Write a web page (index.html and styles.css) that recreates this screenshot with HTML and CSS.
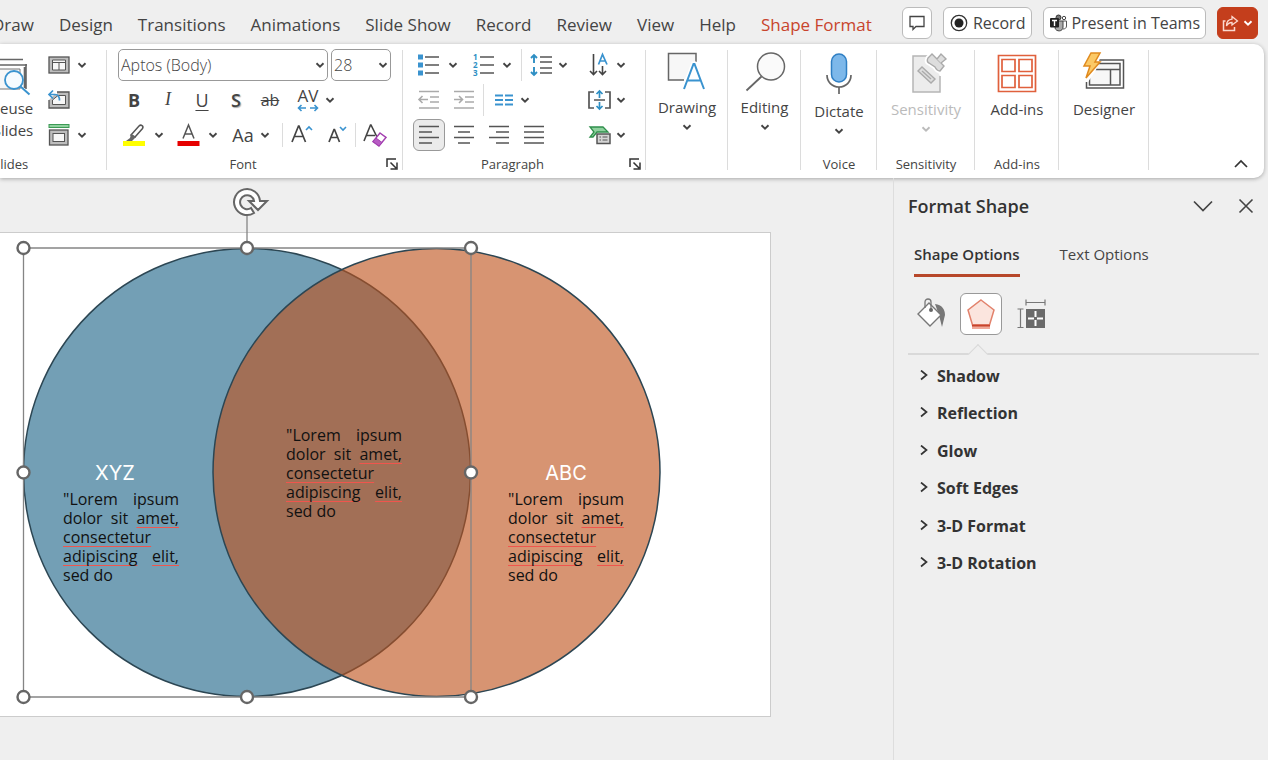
FILE: index.html
```html
<!DOCTYPE html>
<html lang="en">
<head>
    <meta charset="UTF-8">
    <meta name="viewport" content="width=device-width, initial-scale=1.0">
    <title>Presentation - Format Shape</title>
    <link rel="stylesheet" href="styles.css">
</head>
<body>

    <!-- shared symbols -->
    <svg class="defs" aria-hidden="true">
        <symbol id="chev" viewBox="0 0 10 10"><path d="M1.5 3.2 5 6.6 8.5 3.2" fill="none" stroke="currentColor" stroke-width="1.9"/></symbol>
        <symbol id="launch" viewBox="0 0 12 12"><path d="M1 9V1h9M4.500 4.500 10 10M11 4.500V11H4.500" fill="none" stroke="#333" stroke-width="1.500"/></symbol>
        <symbol id="right" viewBox="0 0 10 12"><path d="M2 .5 7.500 5 2 9.500" fill="none" stroke="#333" stroke-width="1.700"/></symbol>
    </svg>

    <header class="topbar">
        <nav class="tabs">
            <a href="#">Draw</a>
            <a href="#">Design</a>
            <a href="#">Transitions</a>
            <a href="#">Animations</a>
            <a href="#">Slide Show</a>
            <a href="#">Record</a>
            <a href="#">Review</a>
            <a href="#">View</a>
            <a href="#">Help</a>
            <a href="#" class="active">Shape Format</a>
        </nav>
        <div class="actions">
            <button class="pill" aria-label="Comments">
                <svg width="16" height="16" viewBox="0 0 16 16"><path d="M1 1.500h14v10H7L4 14.500v-3H1z" fill="none" stroke="#444" stroke-width="1.300"/></svg>
            </button>
            <button class="pill">
                <svg width="18" height="18" viewBox="0 0 18 18"><circle cx="9" cy="9" r="7.700" fill="none" stroke="#333" stroke-width="1.300"/><circle cx="9" cy="9" r="4.500" fill="#222"/></svg>
                Record
            </button>
            <button class="pill teams">
                <svg width="18" height="18" viewBox="0 0 18 18"><circle cx="9.500" cy="3.500" r="2.500" fill="#777" stroke="#333"/><circle cx="15" cy="4" r="1.700" fill="none" stroke="#444"/><path d="M8 7h6v6c0 5-7 5-8 1z" fill="#aaa" stroke="#444"/><path d="M14 7h3.500v5c0 2-1.500 3-3.500 3" fill="none" stroke="#555"/><rect x="1" y="4" width="9" height="9.500" rx="1" fill="#222"/><path d="M3 6.500h5M5.500 6.500V12" stroke="#fff" stroke-width="1.400"/></svg>
                Present in Teams
            </button>
            <button class="pill share" aria-label="Share">
                <svg width="17" height="17" viewBox="0 0 17 17"><path d="M3.500 6H1.500v9.500h11V12" fill="none" stroke="#fbd9cf" stroke-width="1.500"/><path d="M10 1.500 15.500 6 10 10V7.500C7 7.500 5.500 9 4.500 11 4.500 7 6.500 4.500 10 4.200z" fill="none" stroke="#fbd9cf" stroke-width="1.300"/></svg>
                <svg class="chev"><use href="#chev"/></svg>
            </button>
        </div>
    </header>

    <div class="ribbon">
        <section class="group slides">
            <div class="reuse-col">
                <button class="big">
                    <svg width="44" height="40" viewBox="0 0 44 40"><path d="M2 7.500h31M0 13h37M36 12v25M34.500 15v21" fill="none" stroke="#666" stroke-width="1.600"/><path d="M2 17h28v20H2" fill="#f7f7f7" stroke="#777"/><circle cx="24" cy="28" r="9" fill="#f5fbff" stroke="#3a93cf" stroke-width="1.800"/><path d="m30.500 34.500 9 8" stroke="#3a93cf" stroke-width="2"/></svg>
                    <span>Reuse<br>Slides</span>
                </button>
            </div>
            <div class="slide-tools">
                <button class="drop wide" aria-label="Layout">
                    <svg class="icon" viewBox="0 0 24 24"><rect x="2" y="4" width="20" height="16" fill="#bdbdbd" stroke="#555" stroke-width="1.300"/><path d="M5.500 7h13v10h-13z" fill="#f7f7f7" stroke="#555"/><path d="M5.500 9.500h13M12 9.500V17" stroke="#555" fill="none"/></svg>
                    <svg class="chev"><use href="#chev"/></svg>
                </button>
                <button class="drop" aria-label="Reset">
                    <svg class="icon" viewBox="0 0 24 24"><path d="M10 4h12v16H2v-8" fill="#bdbdbd" stroke="#555" stroke-width="1.300"/><path d="M11 7.500h7.500v9h-13V12z" fill="#f7f7f7" stroke="#555"/><path d="M0 1h10v5H0z" fill="#fff"/><path d="M2 6.500h6c3.500 0 4.500 2 4.500 6M6 2.500l-4 4 4 4" fill="none" stroke="#3a93cf" stroke-width="1.700"/></svg>
                </button>
                <button class="drop wide" aria-label="Section">
                    <svg class="icon" viewBox="0 0 24 24"><rect x="2" y="1.500" width="20" height="3" fill="#8fd19e" stroke="#3c9a55"/><rect x="2.500" y="7" width="18.500" height="15" fill="#bdbdbd" stroke="#555" stroke-width="1.300"/><rect x="6" y="10.500" width="11.500" height="8" fill="#f7f7f7" stroke="#555"/></svg>
                    <svg class="chev"><use href="#chev"/></svg>
                </button>
            </div>
            <h2>Slides</h2>
        </section>

        <section class="group font">
            <div class="row fields">
                <label class="field name">
                    <select aria-label="Font"><option>Aptos (Body)</option></select>
                    <svg class="chev"><use href="#chev"/></svg>
                </label>
                <label class="field size">
                    <select aria-label="Font size"><option>28</option></select>
                    <svg class="chev"><use href="#chev"/></svg>
                </label>
            </div>
            <div class="row styles">
                <button class="tool bold">B</button>
                <button class="tool italic">I</button>
                <button class="tool underline">U</button>
                <button class="tool shadow">S</button>
                <button class="tool strike">ab</button>
                <button class="drop spacing" aria-label="Character spacing">
                    <span class="av">AV
                        <svg width="22" height="8" viewBox="0 0 22 8"><path d="M1 4h8M4.500 1l-3 3 3 3M13 4h8M17.500 1l3 3-3 3" fill="none" stroke="#3a93cf" stroke-width="1.600"/></svg>
                    </span>
                    <svg class="chev"><use href="#chev"/></svg>
                </button>
            </div>
            <div class="row colors">
                <button class="drop wide" aria-label="Text highlight color">
                    <svg class="icon" viewBox="0 0 24 24"><path d="m9 12 8-9c2-2 5 0 3.500 2.500L13 14z" fill="#fff" stroke="#555" stroke-width="1.500"/><path d="m9 11-1 4-4 3h6l4-4z" fill="#666"/><path d="M1 18h22v5H1z" fill="#ff0"/></svg>
                    <svg class="chev"><use href="#chev"/></svg>
                </button>
                <button class="drop wide" aria-label="Font color">
                    <svg class="icon" viewBox="0 0 24 24"><path d="M7 15.500 12.500 2 18 15.500M9 11h7" fill="none" stroke="#555" stroke-width="1.500"/><path d="M1.500 18h22v5h-22z" fill="#e60000"/></svg>
                    <svg class="chev"><use href="#chev"/></svg>
                </button>
                <button class="drop"><span class="case">Aa</span> <svg class="chev"><use href="#chev"/></svg></button>
                <div class="grow-tools">
                    <button class="resize" aria-label="Increase font size">
                        <svg class="icon" viewBox="0 0 24 24"><path d="M1 19 7.500 3h.5l6.500 16M3.500 13.500H12" fill="none" stroke="#444" stroke-width="1.700"/><path d="m15 7 3-3 3 3" fill="none" stroke="#3a93cf" stroke-width="1.600"/></svg>
                    </button>
                    <button class="resize" aria-label="Decrease font size">
                        <svg class="icon" viewBox="0 0 24 24"><path d="M6 19 11 6.500h.5L16.500 19M8 14.500h7" fill="none" stroke="#444" stroke-width="1.700"/><path d="m17 4 3 3 3-3" fill="none" stroke="#3a93cf" stroke-width="1.600"/></svg>
                    </button>
                    <button class="resize clear" aria-label="Clear formatting">
                        <svg class="icon" viewBox="0 0 24 24"><path d="M0 18 6.500 2h.5l6 12M2.500 12.500H11" fill="none" stroke="#444" stroke-width="1.600"/><path d="m16 10 6 4.500-7 8.500-6-4.500z" fill="#fff" stroke="#a33fb0" stroke-width="1.500"/><path d="m12 15 6 4.500-3 3.500-6-4.500z" fill="#b85cc4" stroke="#a33fb0"/></svg>
                    </button>
                </div>
            </div>
            <h2>Font</h2>
            <button class="launcher" aria-label="Font settings"><svg width="12" height="12"><use href="#launch"/></svg></button>
        </section>

        <section class="group paragraph">
            <div class="row">
                <button class="drop wide" aria-label="Bullets">
                    <svg class="icon" viewBox="0 0 24 24"><path d="M2 1.500h5v5H2zM2 9.500h5v5H2zM2 17.500h5v5H2z" fill="#3a93cf"/><path d="M9 4h14M9 12h14M9 20h14" stroke="#555" stroke-width="1.700"/></svg>
                    <svg class="chev"><use href="#chev"/></svg>
                </button>
                <button class="drop wide" aria-label="Numbering">
                    <svg class="icon" viewBox="0 0 24 24"><g class="digits"><text x="3" y="7">1</text><text x="3" y="15">2</text><text x="3" y="23">3</text></g><path d="M10 4h14M10 12h14M10 20h14" stroke="#555" stroke-width="1.700"/></svg>
                    <svg class="chev"><use href="#chev"/></svg>
                </button>
                <button class="drop ruled" aria-label="Line spacing">
                    <svg class="icon" viewBox="0 0 24 24"><path d="M4 2v8M4 14v8M1 5l3-3 3 3M1 19l3 3 3-3" fill="none" stroke="#2e8fc4" stroke-width="1.900"/><path d="M10 4h12M10 9h12M10 15h12M10 20h12" stroke="#555" stroke-width="1.700"/></svg>
                    <svg class="chev"><use href="#chev"/></svg>
                </button>
                <button class="drop last" aria-label="Text direction">
                    <svg class="icon" viewBox="0 0 24 24"><path d="M5.500 1v20M2 18l3.500 3.500L9 18M14.500 13v8M11 18l3.500 3.500L18 18" fill="none" stroke="#444" stroke-width="1.600"/><path d="m10.500 11.500 4-10 4.500 10M12 8h5.500" fill="none" stroke="#3a93cf" stroke-width="1.700"/></svg>
                    <svg class="chev"><use href="#chev"/></svg>
                </button>
            </div>
            <div class="row">
                <button class="tool" aria-label="Decrease indent">
                    <svg class="icon" viewBox="0 0 24 24"><path d="M2 3.500h20M13 9h9M13 14h9M2 20h20M2 11.500h9M5.500 8 2 11.500 5.500 15" fill="none" stroke="#aaa" stroke-width="1.600"/></svg>
                </button>
                <button class="tool" aria-label="Increase indent">
                    <svg class="icon" viewBox="0 0 24 24"><path d="M2 3.500h20M13 9h9M13 14h9M2 20h20M2 11.500h8M7 8l3.500 3.500L7 15" fill="none" stroke="#aaa" stroke-width="1.600"/></svg>
                </button>
                <button class="drop ruled columns" aria-label="Columns">
                    <svg class="icon" viewBox="0 0 24 24"><path d="M3 7.500h8M3 12h8M3 16.500h8M13 7.500h8M13 12h8M13 16.500h8" stroke="#3a93cf" stroke-width="2"/></svg>
                    <svg class="chev"><use href="#chev"/></svg>
                </button>
                <button class="drop last" aria-label="Align text">
                    <svg class="icon" viewBox="0 0 24 24"><path d="M6 4H1v16h5M17 4h5v16h-5M6 12h11" fill="none" stroke="#555" stroke-width="1.700"/><path d="M11.500 10V3M8.500 6l3-3 3 3M11.500 14v7M8.500 18l3 3 3-3" fill="none" stroke="#2e8fc4" stroke-width="1.700"/></svg>
                    <svg class="chev"><use href="#chev"/></svg>
                </button>
            </div>
            <div class="row">
                <button class="tool on" aria-label="Align left">
                    <svg class="icon" viewBox="0 0 24 24"><path d="M2 3.500h20M2 9h13M2 14.500h20M2 20h13" stroke="#555" stroke-width="1.700"/></svg>
                </button>
                <button class="tool" aria-label="Center">
                    <svg class="icon" viewBox="0 0 24 24"><path d="M2 3.500h20M6 9h12M2 14.500h20M6 20h12" stroke="#555" stroke-width="1.700"/></svg>
                </button>
                <button class="tool" aria-label="Align right">
                    <svg class="icon" viewBox="0 0 24 24"><path d="M2 3.500h20M9 9h13M2 14.500h20M9 20h13" stroke="#555" stroke-width="1.700"/></svg>
                </button>
                <button class="tool" aria-label="Justify">
                    <svg class="icon" viewBox="0 0 24 24"><path d="M2 3.500h20M2 9h20M2 14.500h20M2 20h20" stroke="#555" stroke-width="1.700"/></svg>
                </button>
                <button class="drop last" aria-label="Convert to SmartArt">
                    <svg class="icon" viewBox="0 0 24 24"><path d="M2 4h13l5 5H9l-4 5H2l4-5z" fill="#8fd19e" stroke="#2f8f4c" stroke-width="1.300"/><rect x="9" y="11" width="13" height="9.500" fill="#d5d5d5" stroke="#555" stroke-width="1.500"/><path d="M11.500 14h1.500M14.500 14h5M11.500 17h1.500M14.500 17h5" stroke="#555"/></svg>
                    <svg class="chev"><use href="#chev"/></svg>
                </button>
            </div>
            <h2>Paragraph</h2>
            <button class="launcher" aria-label="Paragraph settings"><svg width="12" height="12"><use href="#launch"/></svg></button>
        </section>

        <section class="group drawing">
            <button class="big">
                <svg width="40" height="40" viewBox="0 0 40 40"><path d="M29 10V1.500H1.500V28H17" fill="#f7f7f7" stroke="#666" stroke-width="1.500"/><path d="m17 37 9.500-25h1L37 37M20.500 28.500h13" fill="none" stroke="#fff" stroke-width="5"/><path d="m17 37 9.500-25h1L37 37M20.500 28.500h13" fill="none" stroke="#3a93cf" stroke-width="2"/></svg>
                <span>Drawing</span>
                <svg class="chev"><use href="#chev"/></svg>
            </button>
        </section>
        <section class="group editing">
            <button class="big">
                <svg width="40" height="40" viewBox="0 0 40 40"><circle cx="26" cy="14.500" r="13.500" fill="#fafafa" stroke="#666" stroke-width="1.500"/><path d="M16.500 24.500 1.500 38.500" stroke="#666" stroke-width="1.800"/></svg>
                <span>Editing</span>
                <svg class="chev"><use href="#chev"/></svg>
            </button>
        </section>
        <section class="group voice">
            <button class="big">
                <svg width="40" height="44" viewBox="0 0 40 44"><rect x="12.500" y="2" width="15" height="28" rx="7.500" fill="#7db8ea" stroke="#2f7fc4" stroke-width="1.500"/><path d="M8 23c0 7 5 12 12 12s12-5 12-12M20 35v7" fill="none" stroke="#666" stroke-width="1.700"/></svg>
                <span>Dictate</span>
                <svg class="chev"><use href="#chev"/></svg>
            </button>
            <h2>Voice</h2>
        </section>
        <section class="group sensitivity">
            <button class="big" disabled>
                <svg width="40" height="42" viewBox="0 0 40 42"><path d="M23 4H7v36h27V24" fill="#ececec" stroke="#b5b5b5" stroke-width="1.500"/><g stroke-width="1.400"><path d="m12 19 4-4 13 12-4 4z" fill="#ddd" stroke="#aaa"/><path d="m16 19 9 8" stroke="#aaa"/><path d="m22 6 4-4 12 12-4 5c-2 0-4-2-5-4l-6-4c-2-1-2-3-1-5z" fill="#ddd" stroke="#fff" stroke-width="5"/><path d="m22 6 4-4 12 12-4 5c-2 0-4-2-5-4l-6-4c-2-1-2-3-1-5z" fill="#ddd" stroke="#aaa"/><path d="m31 7 4-5 5 5-5 4" fill="#ddd" stroke="#aaa"/></g></svg>
                <span>Sensitivity</span>
                <svg class="chev"><use href="#chev"/></svg>
            </button>
            <h2>Sensitivity</h2>
        </section>
        <section class="group addins">
            <button class="big">
                <svg width="40" height="42" viewBox="0 0 40 42"><path d="M1.500 3.500h37v36h-37zM5 7.500h13v12H5zM22 7.500h13v12H22zM5 23.500h13v12H5zM22 23.500h13v12H22z" fill="none" stroke="#e0603c" stroke-width="1.700"/></svg>
                <span>Add-ins</span>
            </button>
            <h2>Add-ins</h2>
        </section>
        <section class="group designer">
            <button class="big">
                <svg width="42" height="42" viewBox="0 0 42 42"><path d="M3.500 8h37v28h-37z" fill="#fff" stroke="#555" stroke-width="1.500"/><path d="M6.500 11.500H37V33H6.500zM10 17.500h27M27.500 17.500V33" fill="#f7f7f7" stroke="#555" stroke-width="1.500"/><path d="M0 0h19L13 18 5 30H0z" fill="#fff"/><path d="M8 1h9l-5 9h5L3 26l4-12H1z" fill="#fbc966" stroke="#e08a1e" stroke-width="1.500"/></svg>
                <span>Designer</span>
            </button>
        </section>
        <button class="collapse" aria-label="Collapse ribbon">
            <svg width="14" height="10" viewBox="0 0 14 10"><path d="m1 8 6-6 6 6" fill="none" stroke="#333" stroke-width="1.700"/></svg>
        </button>
    </div>

    <div class="workspace">
        <main class="canvas">
            <div class="slide">
                <svg class="venn" width="700" height="530" viewBox="0 -40 700 530">
                    <ellipse cx="247" cy="239.500" rx="223.500" ry="224" fill="#739fb5" stroke="#2c4653" stroke-width="1.500"/>
                    <ellipse cx="436.500" cy="239.500" rx="223.500" ry="224" fill="#be521b" fill-opacity=".62" stroke="#2c4653" stroke-width="1.500"/>
                    <g fill="none" stroke="#858585" stroke-width="1.300">
                        <path d="M23.500 15H471V464H23.500zM247 15V-22"/>
                    </g>
                    <g fill="#fff" stroke="#666" stroke-width="2.400">
                        <circle cx="23.500" cy="15" r="6"/><circle cx="247" cy="15" r="6"/><circle cx="471" cy="15" r="6"/>
                        <circle cx="23.500" cy="239.500" r="6"/><circle cx="471" cy="239.500" r="6"/>
                        <circle cx="23.500" cy="464" r="6"/><circle cx="247" cy="464" r="6"/><circle cx="471" cy="464" r="6"/>
                    </g>
                    <!-- rotate handle -->
                    <path d="M254-20A13 13 0 1 1 260-32h7l-9 9-9-9h5A7 7 0 1 0 251-25z" fill="#fff" stroke="#666" stroke-width="2"/>
                </svg>
                <div class="note left">
                    <h3>XYZ</h3>
                    <p>"Lorem ipsum dolor sit <u>amet,</u> <u>consectetur</u> <u>adipiscing</u> <u>elit,</u> sed do</p>
                </div>
                <div class="note middle">
                    <p>"Lorem ipsum dolor sit <u>amet,</u> <u>consectetur</u> <u>adipiscing</u> <u>elit,</u> sed do</p>
                </div>
                <div class="note right">
                    <h3>ABC</h3>
                    <p>"Lorem ipsum dolor sit <u>amet,</u> <u>consectetur</u> <u>adipiscing</u> <u>elit,</u> sed do</p>
                </div>
            </div>
        </main>

        <aside class="pane">
            <div class="pane-head">
                <h1>Format Shape</h1>
                <button aria-label="Pane options"><svg width="20" height="12" viewBox="0 0 20 12"><path d="m1 1.500 9 9 9-9" fill="none" stroke="#444" stroke-width="1.700"/></svg></button>
                <button aria-label="Close"><svg width="16" height="16" viewBox="0 0 16 16"><path d="m1.500 1.500 13 13M14.500 1.500l-13 13" stroke="#444" stroke-width="1.600"/></svg></button>
            </div>
            <div class="pane-tabs">
                <button class="active">Shape Options</button>
                <button>Text Options</button>
            </div>
            <div class="pane-icons">
                <button aria-label="Fill and line">
                    <svg width="32" height="32" viewBox="0 0 32 32"><path d="M20 6c7 1 10 5 10 11l-3 12-3-12z" fill="#777"/><path d="m14 5 12 12-11 11L3 16z" fill="#fff" stroke="#777" stroke-width="1.400"/><path d="M10 10V4c0-4 6-4 6 0v7" fill="none" stroke="#777" stroke-width="1.300"/><circle cx="16" cy="12" r="2" fill="#666"/></svg>
                </button>
                <button class="on" aria-label="Effects">
                    <svg width="32" height="32" viewBox="0 0 32 32"><path d="M16 2 29 12l-4.500 15h-17L3 12z" fill="#fbe5de" stroke="#e2826c" stroke-width="1.500"/><path d="M7 26.500h18v4.500H7z" fill="#f0a898"/><path d="M7 27.500h18" stroke="#c8442c" stroke-width="2"/></svg>
                </button>
                <button aria-label="Size and properties">
                    <svg width="32" height="32" viewBox="0 0 32 32"><path d="M11 11h19v19H11z" fill="#6a6a6a"/><path d="M11 4.500h19M11 1.500v6M30 1.500v6M5.500 11v18.500M2.500 11h6M2.500 29.500h6" stroke="#777" fill="none" stroke-width="1.200"/><path d="M20.500 13v15M13 20.500h15" stroke="#fff" stroke-width="2" stroke-dasharray="6 3"/></svg>
                </button>
            </div>
            <ul class="sections">
                <li><button><svg width="10" height="12"><use href="#right"/></svg>Shadow</button></li>
                <li><button><svg width="10" height="12"><use href="#right"/></svg>Reflection</button></li>
                <li><button><svg width="10" height="12"><use href="#right"/></svg>Glow</button></li>
                <li><button><svg width="10" height="12"><use href="#right"/></svg>Soft Edges</button></li>
                <li><button><svg width="10" height="12"><use href="#right"/></svg>3-D Format</button></li>
                <li><button><svg width="10" height="12"><use href="#right"/></svg>3-D Rotation</button></li>
            </ul>
        </aside>
    </div>

</body>
</html>
```
FILE: styles.css
```css
/* General Styles */
* {
    margin: 0;
    padding: 0;
    box-sizing: border-box;
}

body {
    min-height: 100vh;
    display: flex;
    flex-direction: column;
    background: #efefef;
    color: #444;
    font-family: "Open Sans", "Noto Sans", sans-serif;
    overflow-x: hidden;
}

button {
    border: none;
    background: none;
    color: inherit;
    font: inherit;
    cursor: pointer;
}

svg {
    display: block;
    flex: none;
    overflow: visible;
}

.defs {
    position: absolute;
    width: 0;
    height: 0;
}

.chev {
    width: 10px;
    height: 10px;
}

.icon {
    width: 24px;
    height: 24px;
}

/* Top bar */
.topbar {
    height: 44px;
    display: flex;
    justify-content: space-between;
    padding-right: 10px;
}

.tabs {
    display: flex;
    gap: 25px;
    margin-left: -8px;
    padding-top: 4px;
    font-size: 17px;
    line-height: 42px;
    white-space: nowrap;
}

.tabs a {
    color: #444;
    text-decoration: none;
}

.tabs .active {
    color: #c8442c;
}

.actions {
    display: flex;
    gap: 11px;
    padding-top: 7px;
}

.pill {
    height: 32px;
    display: flex;
    align-items: center;
    gap: 5px;
    padding: 0 6px;
    border: 1px solid #bbb;
    border-radius: 6px;
    background: #fff;
    font-size: 16px;
    white-space: nowrap;
}

.teams {
    gap: 4px;
    padding: 0 5px;
}

.share {
    gap: 4px;
    padding: 0 4px;
    background: #c43e1c;
    border-color: #c43e1c;
    color: #fff;
}

/* Ribbon */
.ribbon {
    height: 134px;
    display: flex;
    margin-right: 4px;
    padding-top: 3px;
    background: #fff;
    border-radius: 0 10px 10px 0;
    box-shadow: 0 1px 4px rgba(0, 0, 0, 0.3);
}

.group {
    position: relative;
    flex: none;
    display: flex;
    flex-direction: column;
}

.group::after {
    content: "";
    position: absolute;
    right: 0;
    top: 3px;
    width: 1px;
    height: 120px;
    background: #dcdcdc;
}

.group h2 {
    margin-top: auto;
    padding-bottom: 4px;
    font-size: 13px;
    font-weight: 400;
    line-height: 20px;
    text-align: center;
}

.row {
    height: 35px;
    display: flex;
    align-items: center;
}

.drop {
    display: flex;
    align-items: center;
    gap: 4px;
}

.drop.wide {
    gap: 8px;
}

.tool {
    width: 32px;
    height: 32px;
    display: flex;
    align-items: center;
    justify-content: center;
    font-size: 18px;
}

.big {
    display: flex;
    flex-direction: column;
    align-items: center;
    gap: 5px;
    padding-top: 5px;
    font-size: 15px;
    line-height: 20px;
}

.big:disabled {
    color: #bbb;
}

.launcher {
    position: absolute;
    right: 5px;
    bottom: 8px;
}

/* Slides group */
.slides {
    width: 107px;
    display: grid;
    grid-template-columns: 47px 1fr;
    grid-template-rows: 105px 26px;
}

.slides .big {
    width: 44px;
    margin-left: -10px;
    line-height: 22px;
    text-align: right;
}

.slides h2 {
    margin-left: -7px;
    text-align: left;
}

.slide-tools {
    display: grid;
    grid-template-rows: repeat(3, 35px);
}

.slide-tools .wide {
    gap: 6px;
}

/* Font group */
.font {
    width: 296px;
}

.font h2,
.paragraph h2 {
    padding-right: 24px;
}

.fields {
    gap: 3px;
    padding-left: 11px;
}

.field {
    position: relative;
    height: 32px;
}

.field select {
    width: 100%;
    height: 100%;
    appearance: none;
    padding-left: 2px;
    border: 1px solid #999;
    border-radius: 5px;
    background: #fff;
    color: #444;
    font: 16px "Open Sans", sans-serif;
    font-weight: 300;
}

.field .chev {
    position: absolute;
    right: 3px;
    top: 11px;
}

.name {
    width: 210px;
}

.size {
    width: 60px;
}

.styles {
    padding-left: 10px;
}

.styles .tool {
    width: 34px;
}

.bold {
    font-weight: 700;
}

.italic {
    font-family: "Liberation Serif", serif;
    font-style: italic;
}

.underline {
    text-decoration: underline;
    text-underline-offset: 3px;
}

.shadow {
    font-weight: 600;
    text-shadow: 1px 1px 1px #aaa;
}

.styles .strike {
    font-size: 16px;
    text-decoration: line-through;
}

.spacing {
    gap: 6px;
    padding-left: 10px;
}

.av {
    font-size: 17px;
    line-height: 16px;
}

.colors {
    gap: 12px;
    padding-left: 15px;
}

.case {
    width: 26px;
    font-size: 18px;
}

.grow-tools {
    display: flex;
    gap: 8px;
    padding-left: 8px;
    border-left: 1px solid #dcdcdc;
}

.clear {
    padding-left: 8px;
    border-left: 1px solid #dcdcdc;
}

/* Paragraph group */
.paragraph {
    width: 243px;
}

.paragraph .row {
    gap: 3px;
    padding: 0 20px 0 10px;
}

.paragraph .wide {
    padding: 0 6px 0 3px;
}

.ruled {
    height: 32px;
    padding-left: 8px;
    border-left: 1px solid #dcdcdc;
}

.last {
    margin-left: auto;
}

.on {
    border: 1px solid #999;
    border-radius: 6px;
    background: #ebebeb;
}

.digits {
    fill: #2e8fc4;
    font-size: 8px;
    font-weight: 700;
}

/* Large button groups */
.drawing {
    width: 82px;
}

.editing {
    width: 73px;
}

.voice {
    width: 76px;
}

.sensitivity {
    width: 98px;
}

.addins {
    width: 84px;
}

.designer {
    width: 90px;
}

.collapse {
    align-self: flex-end;
    margin-left: auto;
    padding: 9px 16px;
}

/* Workspace */
.workspace {
    flex: 1;
    display: flex;
}

.canvas {
    flex: 1;
    padding: 54px 122px 43px 0;
}

.slide {
    position: relative;
    height: 485px;
    background: #fff;
    border: 1px solid #ccc;
    border-left: none;
}

.venn {
    position: absolute;
    left: 0;
    top: -40px;
}

.note {
    position: absolute;
    width: 116px;
    color: #111;
}

.note h3 {
    margin-bottom: 4px;
    color: #fff;
    font-family: Inter, sans-serif;
    font-size: 20px;
    font-weight: 400;
    line-height: 26px;
    text-align: center;
}

.note p {
    font-size: 16px;
    line-height: 19px;
    text-align: justify;
}

.note u {
    text-decoration: underline solid #f0554d 1px;
    text-decoration-skip-ink: none;
    text-underline-offset: 3px;
}

.left {
    left: 63px;
    top: 227px;
}

.left h3 {
    margin-right: 12px;
}

.middle {
    left: 286px;
    top: 193px;
}

.right {
    left: 508px;
    top: 227px;
}

/* Format pane */
.pane {
    width: 375px;
    padding: 14px 9px 0 14px;
    border-left: 1px solid #ddd;
}

.pane-head {
    display: flex;
    align-items: center;
    gap: 25px;
    padding-right: 5px;
}

.pane-head h1 {
    flex: 1;
    color: #333;
    font-size: 18px;
    font-weight: 600;
    line-height: 28px;
}

.pane-tabs {
    display: flex;
    gap: 40px;
    margin: 20px 6px 16px;
}

.pane-tabs button {
    height: 37px;
    padding-bottom: 7px;
    border-bottom: 3px solid transparent;
    font-size: 15px;
}

.pane-tabs .active {
    color: #333;
    border-color: #b7472a;
    font-weight: 600;
}

.pane-icons {
    position: relative;
    display: flex;
    gap: 8px;
    padding: 0 2px 18px;
    border-bottom: 2px solid #d9d9d9;
}

.pane-icons::after {
    content: "";
    position: absolute;
    left: 63px;
    bottom: -8px;
    width: 13px;
    height: 13px;
    background: #efefef;
    border: solid #d9d9d9;
    border-width: 1px 0 0 1px;
    transform: rotate(45deg);
}

.pane-icons button {
    width: 42px;
    height: 42px;
    display: grid;
    place-items: center;
}

.pane-icons .on {
    background: #fff;
}

.sections {
    height: 225px;
    display: grid;
    grid-template-rows: repeat(6, 1fr);
    margin: 2px 11px;
    list-style: none;
}

.sections button {
    height: 100%;
    display: flex;
    align-items: center;
    gap: 8px;
    color: #333;
    font-size: 16px;
    font-weight: 700;
}
```
